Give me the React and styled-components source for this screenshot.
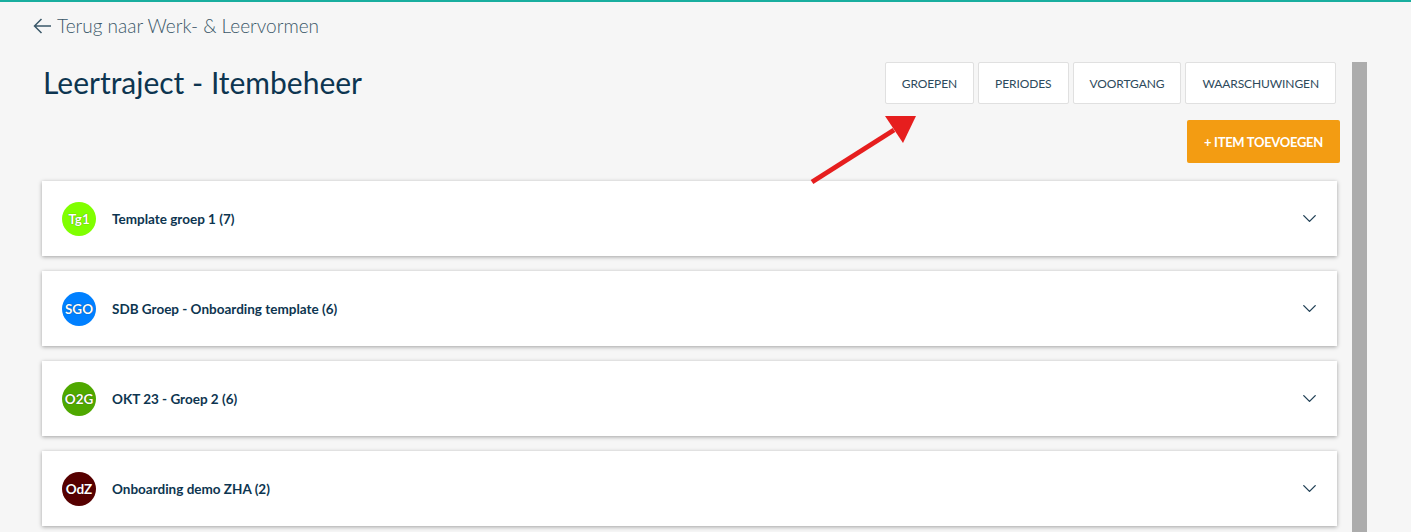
import React from 'react';
import styled, { createGlobalStyle } from 'styled-components';
import { ChevronDown } from 'lucide-react';

const GlobalStyle = createGlobalStyle`
    html, body {
        margin: 0;
        padding: 0;
        height: 100%;
        overflow: hidden;
        background-color: #F6F6F6;
        font-family: Lato, "Open Sans", sans-serif;
    }
`;

const groups = [
    { id: 1, initials: 'Tg1', color: '#80FF00', name: 'Template groep 1 (7)' },
    { id: 2, initials: 'SGO', color: '#0080FF', name: 'SDB Groep - Onboarding template (6)' },
    { id: 3, initials: 'O2G', color: '#4FA800', name: 'OKT 23 - Groep 2 (6)' },
    { id: 4, initials: 'OdZ', color: '#560000', name: 'Onboarding demo ZHA (2)' },
];

const tabs = ['Groepen', 'Periodes', 'Voortgang', 'Waarschuwingen'];

function App() {
    return (
        <>
            <GlobalStyle />
            <Page>
                <BackLink href="#">
                    <svg width="18" height="16" viewBox="0 0 18 16" fill="none" stroke="currentColor" strokeWidth="1.5">
                        <path d="M18 8H1.5M8.5 1L1.5 8l7 7" />
                    </svg>
                    <span>Terug naar Werk- &amp; Leervormen</span>
                </BackLink>
                <Body>
                    <Main>
                        <TopRow>
                            <Title>Leertraject - Itembeheer</Title>
                            <Tabs>
                                {tabs.map((tab) => (
                                    <TabButton key={tab}>{tab}</TabButton>
                                ))}
                            </Tabs>
                        </TopRow>
                        <Actions>
                            <AddButton>+ Item toevoegen</AddButton>
                        </Actions>
                        <GroupList>
                            {groups.map((group) => (
                                <GroupCard key={group.id}>
                                    <Avatar color={group.color}>{group.initials}</Avatar>
                                    <GroupName>{group.name}</GroupName>
                                    <Chevron>
                                        <ChevronDown size={23} strokeWidth={1.4} />
                                    </Chevron>
                                </GroupCard>
                            ))}
                        </GroupList>
                    </Main>
                    <ScrollThumb />
                </Body>
                <Pointer width="112" height="76" viewBox="0 0 112 76">
                    <line x1="4" y1="72" x2="86" y2="20" stroke="#E61E1E" strokeWidth="5" />
                    <polygon points="108,6 77,6 95,33" fill="#E61E1E" />
                </Pointer>
            </Page>
        </>
    );
}

const Page = styled.div`
    position: relative;
    min-height: 532px;
    border-top: 2px solid #19AE9F;
    box-sizing: border-box;
    padding-left: 42px;
`;

const BackLink = styled.a`
    display: flex;
    width: fit-content;
    align-items: center;
    gap: 6px;
    margin: 13px 0 0 -9px;
    color: #3B5869;
    text-decoration: none;
    font-size: 19px;
    font-weight: 300;
    line-height: 22px;
`;

const Body = styled.div`
    display: flex;
    gap: 12px;
    margin-top: 25px;
`;

const Main = styled.div`
    width: 1298px;
`;

const TopRow = styled.div`
    display: flex;
    justify-content: space-between;
    align-items: flex-start;
    padding-right: 4px;
`;

const Title = styled.h1`
    margin: 3px 0 0 1px;
    font-size: 30px;
    font-weight: 400;
    color: #0D3550;
    line-height: 34px;
`;

const Tabs = styled.div`
    display: flex;
    gap: 4px;
`;

const TabButton = styled.button`
    height: 42px;
    padding: 0 16px;
    background-color: #FFFFFF;
    border: 1px solid #E0E0E0;
    border-radius: 2px;
    font-family: inherit;
    font-size: 12px;
    text-transform: uppercase;
    color: #2D4A5C;
    letter-spacing: -0.1px;
`;

const Actions = styled.div`
    display: flex;
    justify-content: flex-end;
    margin-top: 16px;
`;

const AddButton = styled.button`
    height: 43px;
    padding: 0 17px;
    background-color: #F39C12;
    border: none;
    border-radius: 2px;
    color: #FFFFFF;
    font-family: inherit;
    font-size: 13px;
    font-weight: 700;
    letter-spacing: -0.3px;
    text-transform: uppercase;
`;

const GroupList = styled.div`
    display: flex;
    flex-direction: column;
    gap: 15px;
    margin-top: 18px;
    padding-right: 3px;
`;

const GroupCard = styled.div`
    display: flex;
    align-items: center;
    height: 75px;
    padding: 0 16px 0 20px;
    background-color: #FFFFFF;
    box-shadow: 0 1px 4px rgba(0, 0, 0, 0.35);
`;

const Avatar = styled.div`
    display: flex;
    align-items: center;
    justify-content: center;
    width: 34px;
    height: 34px;
    border-radius: 50%;
    background-color: ${(props) => props.color};
    color: #FFFFFF;
    font-size: 13.5px;
    font-weight: 700;
    text-shadow: 0 0 1px rgba(0, 0, 0, 0.6);
`;

const GroupName = styled.div`
    flex: 1;
    margin-left: 16px;
    font-size: 13.5px;
    font-weight: 700;
    color: #0D3550;
`;

const Chevron = styled.div`
    display: flex;
    color: #1F3F55;
`;

const ScrollThumb = styled.div`
    width: 15px;
    height: 480px;
    background-color: #ACACAC;
`;

const Pointer = styled.svg`
    position: absolute;
    left: 808px;
    top: 108px;
`;

export default App;
